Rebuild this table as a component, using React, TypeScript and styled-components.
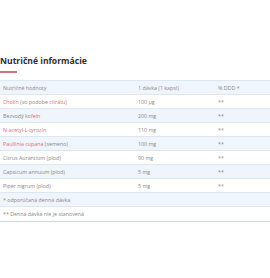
import React from 'react';
import styled, { createGlobalStyle } from 'styled-components';

const GlobalStyle = createGlobalStyle`
  html, body {
    margin: 0;
    padding: 0;
    background: #fff;
  }
  body {
    font-family: "Open Sans", "Liberation Sans", sans-serif;
    overflow: hidden;
  }
`;

type Cell = { text: string; red?: boolean }[];

interface Row {
  name: Cell;
  dose: string;
  ddd: string;
}

const rows: Row[] = [
  { name: [{ text: 'Cholín', red: true }, { text: ' (vo podobe ' }, { text: 'citrátu)', red: true }], dose: '100 µg', ddd: '**' },
  { name: [{ text: 'Bezvodý ' }, { text: 'kofeín', red: true }], dose: '200 mg', ddd: '**' },
  { name: [{ text: 'N-acetyl-L-tyrozín', red: true }], dose: '110 mg', ddd: '**' },
  { name: [{ text: 'Paullinia cupana', red: true }, { text: ' (semeno)' }], dose: '100 mg', ddd: '**' },
  { name: [{ text: 'Citrus Aurantium (plod)' }], dose: '90 mg', ddd: '**' },
  { name: [{ text: 'Capsicum annuum (plod)' }], dose: '5 mg', ddd: '**' },
  { name: [{ text: 'Piper nigrum (plod)' }], dose: '5 mg', ddd: '**' },
];

const notes = ['* odporúčaná denná dávka', '** Denná dávka nie je stanovená'];

const App = () => {
  let index = 0;
  return (
    <Page>
      <GlobalStyle />
      <Title>Nutričné informácie</Title>
      <Underline />
      <Table>
        <TableRow $shaded>
          <TableCell>Nutričné hodnoty</TableCell>
          <TableCell>1 dávka (1 kapsl)</TableCell>
          <TableCell>% DDD *</TableCell>
        </TableRow>
        {rows.map((row) => {
          index++;
          return (
            <TableRow key={index} $shaded={index % 2 === 0}>
              <TableCell>
                {row.name.map((part, i) => (
                  <Part key={i} $red={part.red}>{part.text}</Part>
                ))}
              </TableCell>
              <TableCell>{row.dose}</TableCell>
              <TableCell>{row.ddd}</TableCell>
            </TableRow>
          );
        })}
        {notes.map((note, i) => (
          <TableRow key={note} $shaded={i % 2 === 0} $full>
            <TableCell>{note}</TableCell>
          </TableRow>
        ))}
      </Table>
    </Page>
  );
};

const Page = styled.div`
  width: 270px;
  height: 278px;
  padding-top: 55px;
  box-sizing: border-box;
`;

const Title = styled.h2`
  margin: 0;
  font-size: 8.6px;
  line-height: 12px;
  font-weight: 700;
  color: #2f2f33;
`;

const Underline = styled.div`
  width: 17px;
  height: 2px;
  margin-top: 4px;
  background: #d8707e;
`;

const Table = styled.div`
  margin-top: 7px;
  border-top: 1px solid #dde7ef;
  border-bottom: 1px solid #cfd6dc;
`;

const TableRow = styled.div<{ $shaded?: boolean; $full?: boolean }>`
  display: grid;
  grid-template-columns: ${(p) => (p.$full ? '1fr' : '135px 80px 1fr')};
  height: 14px;
  align-items: center;
  background: ${(p) => (p.$shaded ? '#eff5fa' : '#fff')};
  border-bottom: 1px solid #dde7ef;
  box-sizing: border-box;
  &:last-child {
    border-bottom: none;
  }
`;

const TableCell = styled.div`
  padding-left: 3px;
  font-size: 5.3px;
  line-height: 8px;
  color: #85888c;
  white-space: nowrap;
`;

const Part = styled.span<{ $red?: boolean }>`
  color: ${(p) => (p.$red ? '#e06a7c' : 'inherit')};
`;

export default App;
